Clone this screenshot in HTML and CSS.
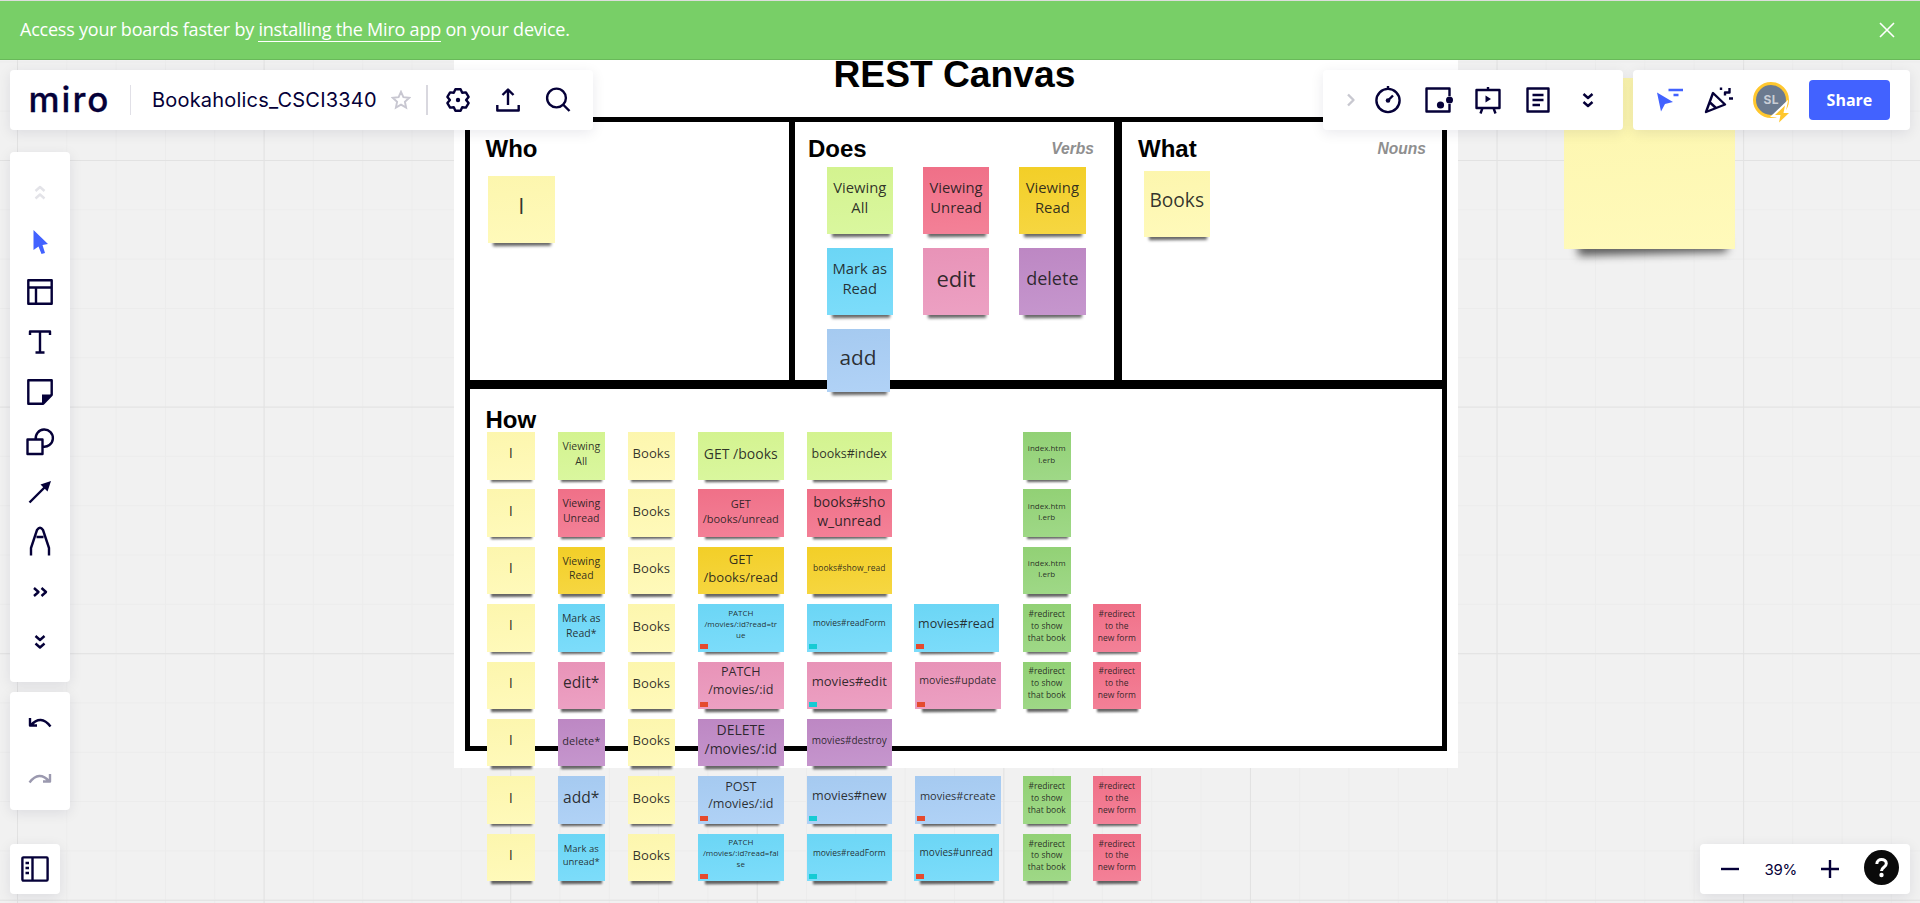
FILE: index.html
```html
<!DOCTYPE html>
<html lang="en">
<head>
<meta charset="utf-8">
<title>Bookaholics_CSCI3340</title>
<link rel="stylesheet" href="styles.css">
</head>
<body>
<div class="board">
  <div class="frame">
    <h1 class="frame-title">REST Canvas</h1>
    <div class="sheet">
      <section class="cell who"><h2>Who</h2></section>
      <section class="cell does"><h2>Does</h2><em>Verbs</em></section>
      <section class="cell what"><h2>What</h2><em>Nouns</em></section>
      <section class="cell how"><h2>How</h2></section>
    </div>
  </div>

  <div class="note yellow huge"></div>
  <div class="note yellow large at-who f22">I</div>
  <div class="note yellow large at-what f19">Books</div>
  <div class="verbs">
    <div class="note lime large f15">Viewing<br>All</div>
    <div class="note red large f15">Viewing<br>Unread</div>
    <div class="note gold large f15">Viewing<br>Read</div>
    <div class="note cyan large f15">Mark as<br>Read</div>
    <div class="note pink large f22">edit</div>
    <div class="note purple large f18">delete</div>
    <div class="note blue medium f21">add</div>
  </div>

  <div class="routes">
    <div class="note yellow c1 f15">I</div><div class="note lime f10">Viewing<br>All</div><div class="note yellow f13">Books</div>
    <div class="note lime wide f14">GET /books</div><div class="note lime wide f12">books#index</div>
    <div class="note green c7 f8">index.htm<br>l.erb</div>

    <div class="note yellow c1 f15">I</div><div class="note red f10">Viewing<br>Unread</div><div class="note yellow f13">Books</div>
    <div class="note red wide f11">GET<br>/books/unread</div><div class="note red wide f14">books#sho<br>w_unread</div>
    <div class="note green c7 f8">index.htm<br>l.erb</div>

    <div class="note yellow c1 f15">I</div><div class="note gold f10">Viewing<br>Read</div><div class="note yellow f13">Books</div>
    <div class="note gold wide f13">GET<br>/books/read</div><div class="note gold wide f85">books#show_read</div>
    <div class="note green c7 f8">index.htm<br>l.erb</div>

    <div class="note yellow c1 f15">I</div><div class="note cyan f10">Mark as<br>Read*</div><div class="note yellow f13">Books</div>
    <div class="note cyan wide tag-red f8">PATCH<br>/movies/:id?read=tr<br>ue</div><div class="note cyan wide tag-teal f85">movies#readForm</div><div class="note cyan wide tag-red f12">movies#read</div>
    <div class="note green f85">#redirect<br>to show<br>that book</div><div class="note red f85">#redirect<br>to the<br>new form</div>

    <div class="note yellow c1 f15">I</div><div class="note pink f16">edit*</div><div class="note yellow f13">Books</div>
    <div class="note pink wide tag-red f125">PATCH<br>/movies/:id</div><div class="note pink wide tag-teal f13">movies#edit</div><div class="note pink wide tag-red shift f105">movies#update</div>
    <div class="note green f85">#redirect<br>to show<br>that book</div><div class="note red f85">#redirect<br>to the<br>new form</div>

    <div class="note yellow c1 f15">I</div><div class="note purple f11">delete*</div><div class="note yellow f13">Books</div>
    <div class="note purple wide f14 raised">DELETE<br>/movies/:id</div><div class="note purple wide f10s">movies#destroy</div>

    <div class="note yellow c1 f15">I</div><div class="note blue f16">add*</div><div class="note yellow f13">Books</div>
    <div class="note blue wide tag-red f125">POST<br>/movies/:id</div><div class="note blue wide tag-teal f125">movies#new</div><div class="note blue wide tag-red shift f11">movies#create</div>
    <div class="note green f85">#redirect<br>to show<br>that book</div><div class="note red f85">#redirect<br>to the<br>new form</div>

    <div class="note yellow c1 f15">I</div><div class="note cyan f95">Mark as<br>unread*</div><div class="note yellow f13">Books</div>
    <div class="note cyan wide tag-red f8">PATCH<br>/movies/:id?read=fal<br>se</div><div class="note cyan wide tag-teal f85">movies#readForm</div><div class="note cyan wide tag-red f10s">movies#unread</div>
    <div class="note green f85">#redirect<br>to show<br>that book</div><div class="note red f85">#redirect<br>to the<br>new form</div>
  </div>
</div>

<div class="shell">
  <div class="banner">
    <p>Access your boards faster by <a>installing the Miro app</a> on your device.</p>
    <svg class="close" width="16" height="16" viewBox="0 0 16 16"><path d="M1 1l14 14M15 1L1 15"/></svg>
  </div>

  <header class="header">
    <div class="panel bar-left">
      <span class="logo">miro</span>
      <i class="rule"></i>
      <span class="board-name">Bookaholics_CSCI3340</span>
      <svg class="star" width="20" height="20" viewBox="0 0 20 20"><path d="M10 1.800l2.400 5.400 5.800.6-4.300 4 1.200 5.800-5.100-2.900-5.100 2.900 1.200-5.800-4.300-4 5.800-.6z"/></svg>
      <i class="rule dark"></i>
      <svg class="ico gear" width="26" height="26" viewBox="0 0 26 26"><path d="M10.400 2.300h5.200l1.600 3.500 3.700-.4 2.700 4.500L21.100 13l2.500 3.100-2.700 4.500-3.700-.4-1.600 3.500h-5.200l-1.600-3.500-3.700.4-2.700-4.500L4.900 13 2.400 9.900l2.700-4.500 3.700.4z"/><circle class="solid" cx="13" cy="13" r="2.200"/></svg>
      <svg class="ico upload" width="24" height="26" viewBox="0 0 24 26"><path d="M12 18V3M6.500 8L12 2.500 17.500 8M1.300 18v5.500h21.400V18"/></svg>
      <svg class="ico search" width="26" height="26" viewBox="0 0 26 26"><circle cx="11.500" cy="11" r="9.400"/><path d="M18 17.500l6.500 6.500"/></svg>
    </div>
    <div class="panel bar-tools">
      <svg class="ico pale" width="10" height="14" viewBox="0 0 10 14"><path d="M2 1.500L7.500 7 2 12.500"/></svg>
      <svg class="ico" width="28" height="30" viewBox="0 0 28 30"><circle cx="14" cy="15.500" r="11.600"/><path d="M14 1v4M14 15.500l5-5"/><circle class="solid" cx="14" cy="15.500" r="2.300"/></svg>
      <svg class="ico" width="26" height="26" viewBox="0 0 26 26"><path d="M24.500 9V1.500h-23v23h23V17"/><circle class="solid" cx="24.500" cy="13" r="3.500"/><circle class="solid" cx="15.500" cy="18" r="3.600"/></svg>
      <svg class="ico" width="28" height="30" viewBox="0 0 28 30"><path d="M2.500 5h23v18h-23zM14 2v3M8.500 23l-2 5.500M19.500 23l2 5.500"/><path class="solid" d="M11.500 10.500l5.500 3.500-5.500 3.500z"/></svg>
      <svg class="ico" width="24" height="26" viewBox="0 0 24 26"><path d="M1.500 1.500h21v23h-21zM6.500 8h11M6.500 13h11M6.500 18h7.500"/></svg>
      <svg class="ico" width="14" height="18" viewBox="0 0 14 18"><path d="M2.500 3L7 7l4.500-4M2.500 11l4.500 4 4.500-4"/></svg>
    </div>
    <div class="panel bar-share">
      <svg class="ico" width="28" height="26" viewBox="0 0 28 26"><path class="royal" d="M1 5.500l16 9.500-8 2-4 7.500z"/><path class="royal-line" d="M12.500 3H27M17.500 8h5"/></svg>
      <svg class="ico" width="30" height="30" viewBox="0 0 30 30"><path d="M9 8L2 27l19-7.500zM6 17.500l6 5.500"/><path d="M17 2.500v2.500M21 10.500V7.500h4.500V3M25 13.500h4"/></svg>
      <div class="avatar">SL<svg width="16" height="18" viewBox="0 0 16 18"><path d="M11 .5L1 10h5.500L5 17.500 15 8H9.500z"/></svg></div>
      <button class="share">Share</button>
    </div>
  </header>

  <aside class="rail">
    <nav class="panel tools">
      <svg class="ico faint" width="12" height="16" viewBox="0 0 12 16"><path d="M1.500 6L6 2l4.500 4M1.500 13.500L6 9.500l4.500 4"/></svg>
      <svg class="ico" width="26" height="26" viewBox="0 0 26 26"><path class="royal" d="M6.500 0l14.500 14-5.500 1 2.500 8-3.500 1-3-7.500-5 3.500z"/></svg>
      <svg class="ico" width="26" height="26" viewBox="0 0 26 26"><path d="M1.300 1.300h23.400v23.400H1.300zM1.300 8.500h23.400M9 8.500v16"/></svg>
      <svg class="ico" width="26" height="26" viewBox="0 0 26 26"><path d="M3 6V2.500h20V6M13 2.500v21M8.500 23.500h9"/></svg>
      <svg class="ico" width="26" height="26" viewBox="0 0 26 26"><path d="M1.300 1.300h23.400v14.500l-8.500 8.900H1.300z"/><path class="solid" d="M15 25v-9.500h9.500z"/></svg>
      <svg class="ico" width="28" height="26" viewBox="0 0 28 26"><path d="M1.500 10.500h15v14.500h-15z"/><path d="M9.800 10.500a8.600 8.600 0 1 1 6.700 7"/></svg>
      <svg class="ico" width="26" height="26" viewBox="0 0 26 26"><path d="M2.500 23.500L18 8"/><path class="solid" d="M13.500 5.500L24 2 20.500 12.500z"/></svg>
      <svg class="ico" width="26" height="30" viewBox="0 0 26 30"><path d="M4 29.500V22L10 4Q13-.5 16 4L22 22v7.500M9.500 11h7"/></svg>
      <svg class="ico" width="16" height="12" viewBox="0 0 16 12"><path d="M2 3l4.500 4L2 11M9.500 3L14 7l-4.500 4"/></svg>
      <svg class="ico" width="12" height="16" viewBox="0 0 12 16"><path d="M1.500 3L6 7l4.500-4M1.500 10.500L6 14.500l4.500-4"/></svg>
    </nav>
    <div class="panel history">
      <svg class="ico" width="24" height="14" viewBox="0 0 24 14"><path d="M2 2v7.500h7M2.500 9.500Q13-2 22.500 10.500"/></svg>
      <svg class="ico muted" width="24" height="14" viewBox="0 0 24 14"><path d="M22 2v7.500h-7M21.500 9.500Q11-2 1.500 10.500"/></svg>
    </div>
    <div class="panel frames">
      <svg class="ico" width="28" height="26" viewBox="0 0 28 26"><rect x="1.400" y="1.400" width="25.200" height="23.200" rx="1"/><path d="M11.500 1.500v23M4.500 7h3.500M4.500 12h3.500M4.500 17h3.500"/></svg>
    </div>
  </aside>

  <div class="panel zoom">
    <svg class="ico" width="18" height="18" viewBox="0 0 18 18"><path d="M0 9h18"/></svg>
    <span>39%</span>
    <svg class="ico" width="18" height="18" viewBox="0 0 18 18"><path d="M0 9h18M9 0v18"/></svg>
    <svg class="help" width="35" height="35" viewBox="0 0 35 35"><circle class="disc" cx="17.500" cy="17.500" r="17.500"/><path d="M12.800 14c0-6.200 9.500-5.700 9.500-.5 0 4-4.800 3.600-4.800 7.500"/><circle class="dot" cx="17.500" cy="25" r="2.200"/></svg>
  </div>
</div>
</body>
</html>
```
FILE: styles.css
```css
* { box-sizing: border-box; }
body { margin: 0; width: 1920px; height: 903px; overflow: hidden; position: relative; font-family: "Open Sans", sans-serif; color: #050038; }

/* canvas with a two-level grid */
.board {
  position: absolute; inset: 0; isolation: isolate; background-color: #f1f1f1;
  background-image:
    linear-gradient(90deg, #e2e2e2 1px, transparent 1px), linear-gradient(#e2e2e2 1px, transparent 1px),
    linear-gradient(90deg, #ececec 1px, transparent 1px), linear-gradient(#ececec 1px, transparent 1px);
  background-size: 246.600px 246.600px, 246.600px 246.600px, 49.320px 49.320px, 49.320px 49.320px;
  background-position: 17px 160px;
}
.frame { position: absolute; z-index: -2; left: 454px; top: 0; width: 1004px; height: 768px; background: #fff; font-family: "Liberation Sans", Arial, sans-serif; color: #000; padding: 53px 11px 17px; display: flex; flex-direction: column; }
.frame-title { margin: 0; height: 64px; padding-left: 368.500px; font-size: 37.200px; line-height: 42px; font-weight: 700; white-space: nowrap; }
.sheet { width: 982px; height: 634px; background: #000; border: 5px solid #000; display: grid; grid-template: 257.500px 357px / 319px 319px 320px; column-gap: 7px; row-gap: 9.500px; }
.cell { background: #fff; display: flex; justify-content: space-between; align-items: flex-start; padding: 13px 20px 0 15.500px; }
.cell h2 { margin: 0; font-size: 24px; line-height: 28px; }
.cell em { font-size: 15.600px; line-height: 28px; font-weight: 700; color: #8f8f8f; }
.does { padding-left: 13px; margin-left: -1px; margin-right: 1px; }
.what { padding-left: 16px; padding-right: 16px; }
.how { grid-column: 1 / -1; padding-top: 17px; }

/* sticky notes */
.note { position: relative; width: 47.500px; height: 47.500px; display: flex; align-items: center; justify-content: center; text-align: center; line-height: 1.380; padding-bottom: 4.500px; color: rgba(26,26,26,.9); white-space: nowrap; background-image: linear-gradient(175deg, rgba(120,90,0,.02), rgba(255,255,255,.12)); }
.note::before { content: ""; position: absolute; z-index: -1; left: 8%; right: 5%; bottom: -2.500px; height: 6px; background: rgba(0,0,0,.6); filter: blur(1.300px); transform: rotate(-.5deg); }
.wide { width: 85.500px; }
.large { width: 66.500px; height: 66.500px; padding-bottom: 6px; }
.large::before, .medium::before { bottom: -3px; filter: blur(1.800px); }
.medium { width: 63px; height: 63px; padding-bottom: 7px; }
.raised { padding-bottom: 7px; }
.huge { position: absolute; left: 1564px; top: 78px; width: 170.500px; height: 171px; }
.huge::before { left: 14px; right: 8px; bottom: -5px; height: 14px; background: rgba(0,0,0,.62); filter: blur(4px); transform: rotate(-1.500deg); }
.at-who { position: absolute; left: 488px; top: 176px; padding-bottom: 8px; }
.at-what { position: absolute; left: 1143.500px; top: 170.500px; padding-bottom: 8px; }
.verbs { position: absolute; left: 826.500px; top: 167px; display: grid; grid-template-columns: repeat(3, 96.300px); grid-auto-rows: 81px; }
.routes { position: absolute; left: 487px; top: 432px; display: grid; grid-template-columns: 70.500px 70px 70.500px 108.500px 107px 109.500px 70px 48px; grid-auto-rows: 57.400px; }
.c1 { grid-column: 1; padding-bottom: 6.500px; }
.c7 { grid-column: 7; }
.shift { left: 1.500px; }
.yellow { background-color: #fff9b1; }
.lime { background-color: #d5f692; }
.red { background-color: #f2708a; }
.gold { background-color: #f5d128; }
.cyan { background-color: #6bd8fa; }
.pink { background-color: #ea94bb; }
.purple { background-color: #be88c7; }
.blue { background-color: #a6ccf5; }
.green { background-color: #92d377; }
.tag-red, .tag-teal { padding-bottom: 9.500px; }
.tag-red::after, .tag-teal::after { content: ""; position: absolute; left: 2px; bottom: 2.500px; width: 8px; height: 5px; background: #e54a2e; }
.tag-teal::after { background: #16cbd4; }
.f8 { font-size: 8px; }
.f85 { font-size: 8.500px; }
.f95 { font-size: 9.500px; }
.f10s { font-size: 10px; }
.f10 { font-size: 10.500px; }
.f105 { font-size: 10.600px; }
.f11 { font-size: 11px; }
.f12 { font-size: 12.500px; }
.f125 { font-size: 12.600px; }
.f13 { font-size: 13.100px; }
.f14 { font-size: 14px; }
.f15 { font-size: 14.800px; }
.f16 { font-size: 15.600px; }
.f18 { font-size: 18px; }
.f19 { font-size: 19.200px; }
.f21 { font-size: 20.800px; }
.f22 { font-size: 22px; }

/* application chrome */
.shell { position: relative; width: 1920px; height: 903px; display: flex; flex-direction: column; border-top: 1px solid #ddd; }
.banner { flex: none; height: 59px; border-bottom: 1px solid #69b95a; background: #78cf67; color: #fff; display: flex; align-items: center; justify-content: space-between; padding: 0 25px 0 20px; }
.banner p { margin: -2px 0 0; font-size: 18px; line-height: 24px; letter-spacing: -.22px; }
.banner a { border-bottom: 1px solid #fff; }
.close { fill: none; stroke: #fff; stroke-width: 1.600; }
.panel { background: #fff; border-radius: 4px; box-shadow: 0 3px 14px rgba(5,0,56,.09); }
.ico { fill: none; stroke: #050038; stroke-width: 2.400; flex: none; overflow: visible; stroke-linejoin: round; }
.solid { fill: #050038; stroke: none; }
.royal { fill: #4262ff; stroke: none; }
.royal-line { stroke: #4262ff; }
.pale { stroke: #c8c8d0; }
.faint { stroke: #e3e3e8; }
.muted { stroke: #9b99af; }
.header { flex: none; display: flex; padding: 10px 10px 0; height: 70px; }
.header .panel { height: 60px; display: flex; align-items: center; }
.bar-left { width: 583px; padding-left: 18.500px; }
.logo { width: 81.500px; font: 500 35px/40px Inter, sans-serif; letter-spacing: 2px; position: relative; top: -1px; -webkit-text-stroke: .3px #050038; }
.rule { width: 1px; height: 30px; background: #e1e0e7; margin-left: 20px; }
.board-name { width: 225px; margin-left: 21px; font: 400 20px/30px Inter, sans-serif; letter-spacing: .2px; white-space: nowrap; }
.star { margin-left: 14px; fill: none; stroke: #c8c7d1; stroke-width: 1.900; }
.rule.dark { margin-left: 15px; background: #d9d8df; width: 2px; }
.gear { margin-left: 17px; }
.upload { margin-left: 25px; }
.search { margin-left: 25px; }
.header .bar-tools { width: 300px; margin-left: 730px; padding-left: 15px; display: grid; grid-template-columns: 25px repeat(5, 50px); justify-items: center; }
.bar-share { width: 277px; margin-left: 10px; padding: 0 20px 0 23px; justify-content: space-between; }
.avatar { position: relative; width: 36px; height: 36px; border-radius: 50%; border: 3px solid #ffc72e; background: #6b7a8f; color: #c9ced6; font: 700 12px/30px Inter, sans-serif; text-align: center; letter-spacing: .5px; }
.avatar svg { position: absolute; right: -4px; bottom: -8px; fill: #ffc72e; stroke: #fff; stroke-width: 4; paint-order: stroke; overflow: visible; }
.share { width: 81px; height: 40px; border: 0; border-radius: 4px; background: #4262ff; color: #fff; font: 700 16px "Open Sans", sans-serif; padding: 0; }
.rail { display: flex; flex-direction: column; padding: 22px 0 0 10px; }
.rail .panel { display: flex; flex-direction: column; align-items: center; width: 60px; }
.rail .tools { height: 530px; padding-top: 16px; display: grid; grid-auto-rows: 49.800px; justify-items: center; }
.history { height: 118px; margin-top: 10px; padding: 24px 0; justify-content: space-between; }
.rail .frames { width: 50px; height: 50px; margin-top: 34px; justify-content: center; }
.zoom { position: absolute; right: 10px; bottom: 9px; width: 210px; height: 50px; display: flex; align-items: center; padding: 0 11px 0 21px; font: 400 15px Inter, sans-serif; letter-spacing: -.3px; }
.zoom span { width: 31px; margin: 0 25.500px; }
.zoom .help { margin-left: 25px; margin-top: -3px; }
.help { fill: none; stroke: #fff; stroke-width: 3; }
.disc { fill: #0a0a0a; stroke: none; }
.dot { fill: #fff; stroke: none; }
```
